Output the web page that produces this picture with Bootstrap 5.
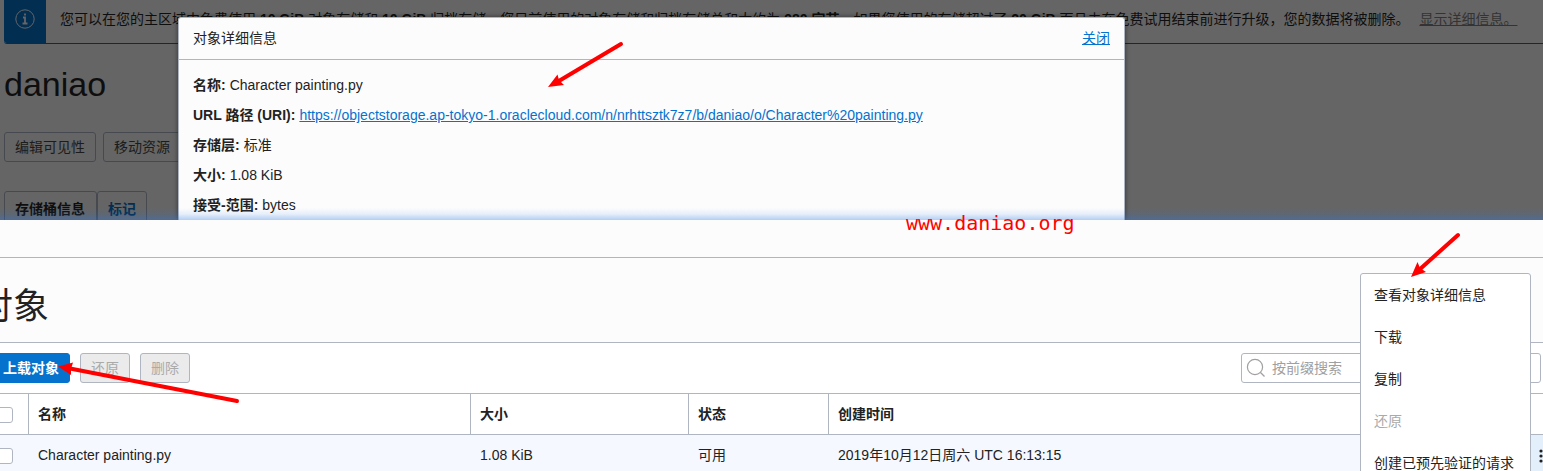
<!DOCTYPE html>
<html lang="zh-CN">
<head>
<meta charset="utf-8">
<meta name="viewport" content="width=device-width, initial-scale=1">
<title>对象存储</title>
<link href="https://cdn.jsdelivr.net/npm/bootstrap@5.3.0/dist/css/bootstrap.min.css" rel="stylesheet">
<style>
:root { --line: #afb6c2; --ink: #222; --link: #0572ce; }
body { font-family: "Liberation Sans", "Noto Sans CJK SC", sans-serif; font-size: 14px; line-height: 20px; color: var(--ink); background: #fcfcfc; }
a { color: var(--link); }
.btn { --bs-btn-font-size: 14px; --bs-btn-line-height: 20px; --bs-btn-padding-x: 10px; --bs-btn-padding-y: 4px; --bs-btn-border-radius: 3px; white-space: nowrap; }
/* dimmed bucket page with the details dialog on top */
.dimmed { height: 220px; background: #656565; color: #0e0e0e; }
.notice { height: 44px; margin-left: 4px; border-bottom: 1px solid #022e52; border-radius: 0 0 0 3px; }
.notice-icon { width: 42px; padding-bottom: 6px; background: #022e52; border-bottom-left-radius: 3px; }
.notice-text { padding: 9px 14px; }
.notice a { color: #333; margin-left: 6px; }
.bucket-name { font-size: 34px; line-height: 44px; margin: 18px 0 26px; }
.bucket-actions { gap: 7px; margin-bottom: 29px; }
.btn-dim { --bs-btn-color: #1c1c1c; --bs-btn-border-color: #464a50; }
.tab-dim { --bs-btn-padding-y: 7px; --bs-btn-color: #0e0e0e; --bs-btn-border-color: #464a50; --bs-btn-border-radius: 3px 3px 0 0; font-weight: 700; }
.tab-info { padding-right: 11px; }
.tab-link { --bs-btn-color: #022e52; }
.dialog { top: 17px; left: 178px; right: 418px; bottom: 0; background: #fcfcfc; color: var(--ink); border: 1px solid var(--line); border-bottom: 0; border-radius: 3px 3px 0 0; box-shadow: 0 0 5px rgba(0,0,0,.5); }
.dialog-head { height: 42px; padding: 0 14px 2px; border-bottom: 1px solid var(--line); }
.dialog dl { line-height: 30px; padding: 10px 14px 0; }
.dialog dd { margin: 0; }
.glow { height: 12px; background: linear-gradient(rgba(40,120,230,0), rgba(40,120,230,.1) 50%, rgba(40,120,230,.35)); }
.watermark { left: 906px; top: 210px; font: 20px/26px "DejaVu Sans Mono", monospace; color: #f00; }
/* object list */
.objects-strip { height: 38px; border-bottom: 1px solid var(--line); }
.objects-title { padding: 27px 0 13px; border-bottom: 1px solid var(--line); }
.objects-title h2 { font-family: "Liberation Sans", "Noto Sans CJK SC", sans-serif; font-size: 36px; line-height: 44px; margin: 0 0 0 -23px; }
.objects-bar { height: 50px; }
.btn-up { --bs-btn-bg: #0572ce; --bs-btn-border-color: #0572ce; --bs-btn-color: #fff; font-weight: 700; margin-left: -8px; }
.btn-off { --bs-btn-disabled-bg: #ebebeb; --bs-btn-disabled-border-color: #afb6c2; --bs-btn-disabled-color: #aaa; --bs-btn-disabled-opacity: 1; width: 50px; padding: 4px 0; margin-left: 10px; }
.search { width: 300px; height: 30px; margin-right: 2px; padding-left: 4px; border: 1px solid var(--line); border-radius: 3px; }
.search input { outline: 0; min-width: 0; margin-left: 6px; }
.search input::placeholder { color: #a0a0a0; }
.objects-table { table-layout: fixed; width: 100%; border-collapse: separate; border-spacing: 0; }
.objects-table th { height: 42px; border: solid var(--line); border-width: 1px 1px 1px 0; padding: 0 9px; }
.objects-table th:nth-last-child(-n+2) { border-right: 0; }
.objects-table td { height: 40px; padding: 0 9px; background: #f5f8fe; }
.objects-table td.row-menu { background: #e3f0fb; padding: 0; text-align: right; }
.objects-table .pick { padding: 0; }
.pick input { appearance: none; display: block; width: 16px; height: 16px; margin: 2px 0 0 -3px; background: #fff; border: 1px solid var(--line); border-radius: 3px; }
.c-pick { width: 29px; } .c-name { width: 442px; } .c-size { width: 218px; } .c-state { width: 140px; } .c-menu { width: 20px; }
.actions { top: 273px; right: 12px; width: 171px; background: #fff; border: 1px solid var(--line); border-radius: 3px; }
.actions button { height: 42px; padding: 0 13px; color: var(--ink); }
.actions button:disabled { color: #aaa; }
.arrows { left: 0; top: 0; pointer-events: none; }
</style>
</head>
<body>
<div class="page position-relative overflow-hidden vh-100">
  <section class="dimmed position-relative overflow-hidden">
    <div class="notice d-flex">
      <div class="notice-icon d-flex align-items-center justify-content-center flex-shrink-0">
        <svg width="20" height="20" viewBox="0 0 20 20" fill="none" stroke="#656565"><circle cx="10" cy="10" r="9.2"/><path d="M10 4.500v2M8 8.500h2v6M7.500 14.500h5" stroke-width="1.800"/></svg>
      </div>
      <div class="notice-text text-nowrap">您可以在您的主区域中免费使用 <b>10 GiB</b> 对象存储和 <b>10 GiB</b> 归档存储。您目前使用的对象存储和归档存储总和大约为 <b>980 字节</b>。如果您使用的存储超过了 <b>20 GiB</b> 而且未在免费试用结束前进行升级，您的数据将被删除。 <a href="#">显示详细信息。</a></div>
    </div>
    <div class="ps-1">
      <h1 class="bucket-name fw-normal">daniao</h1>
      <div class="bucket-actions d-flex"><button class="btn btn-dim" type="button">编辑可见性</button><button class="btn btn-dim" type="button">移动资源</button></div>
      <div class="d-flex"><button class="btn tab-dim tab-info" type="button">存储桶信息</button><button class="btn tab-dim tab-link" type="button">标记</button></div>
    </div>
    <div class="dialog position-absolute" role="dialog" aria-labelledby="dlg">
      <div class="dialog-head d-flex align-items-center justify-content-between"><span id="dlg">对象详细信息</span><a href="#">关闭</a></div>
      <dl class="m-0">
        <div class="d-flex gap-1"><dt>名称:</dt><dd>Character painting.py</dd></div>
        <div class="d-flex gap-1"><dt>URL 路径 (URI):</dt><dd><a href="#">https://objectstorage.ap-tokyo-1.oraclecloud.com/n/nrhttsztk7z7/b/daniao/o/Character%20painting.py</a></dd></div>
        <div class="d-flex gap-1"><dt>存储层:</dt><dd>标准</dd></div>
        <div class="d-flex gap-1"><dt>大小:</dt><dd>1.08 KiB</dd></div>
        <div class="d-flex gap-1"><dt>接受-范围:</dt><dd>bytes</dd></div>
      </dl>
    </div>
    <div class="glow position-absolute bottom-0 start-0 end-0"></div>
  </section>

  <section>
    <div class="objects-strip"></div>
    <div class="objects-title"><h2 class="fw-normal">对象</h2></div>
    <div class="objects-bar bg-white d-flex align-items-center">
      <button class="btn btn-up" type="button">上载对象</button>
      <button class="btn btn-off" type="button" disabled>还原</button>
      <button class="btn btn-off" type="button" disabled>删除</button>
      <label class="search ms-auto d-flex align-items-center bg-white">
        <svg width="20" height="20" viewBox="0 0 20 20" fill="none" stroke="#a0a0a0" stroke-width="1.200"><circle cx="9" cy="9" r="7.600"/><path d="M14.500 14.500l4 4"/></svg>
        <input class="border-0 p-0 flex-grow-1" type="search" placeholder="按前缀搜索" aria-label="按前缀搜索">
      </label>
    </div>
    <table class="objects-table">
      <colgroup><col class="c-pick"><col class="c-name"><col class="c-size"><col class="c-state"><col><col class="c-menu"></colgroup>
      <thead class="bg-white"><tr><th class="pick"><input type="checkbox" aria-label="全选"></th><th>名称</th><th>大小</th><th>状态</th><th>创建时间</th><th></th></tr></thead>
      <tbody><tr><td class="pick"><input type="checkbox" aria-label="选择"></td><td>Character painting.py</td><td>1.08 KiB</td><td>可用</td><td>2019年10月12日周六 UTC 16:13:15</td>
        <td class="row-menu"><svg width="4" height="16" viewBox="0 0 4 16" fill="#222"><circle cx="2" cy="3" r="1.600"/><circle cx="2" cy="8" r="1.600"/><circle cx="2" cy="13" r="1.600"/></svg></td></tr></tbody>
    </table>
  </section>

  <div class="actions position-absolute d-flex flex-column" role="menu">
    <button class="border-0 bg-transparent text-start text-nowrap" type="button">查看对象详细信息</button>
    <button class="border-0 bg-transparent text-start text-nowrap" type="button">下载</button>
    <button class="border-0 bg-transparent text-start text-nowrap" type="button">复制</button>
    <button class="border-0 bg-transparent text-start text-nowrap" type="button" disabled>还原</button>
    <button class="border-0 bg-transparent text-start text-nowrap" type="button">创建已预先验证的请求</button>
  </div>

  <div class="watermark position-absolute">www.daniao.org</div>
  <svg class="arrows position-absolute" width="1543" height="471" viewBox="0 0 1543 471" fill="#f00" stroke="#f00" stroke-linecap="round">
    <path d="M621 44L558 81.500" stroke-width="4"/><path stroke="none" d="M548 87L557.500 74.500L559 80L564 85Z"/>
    <path d="M1458 235L1419 270" stroke-width="4"/><path stroke="none" d="M1411 277L1417.500 262L1420 268L1426 272Z"/>
    <path d="M237 401L70 368.500" stroke-width="4"/><path stroke="none" d="M58 366.500L73 362.500L71 369L71 375Z"/>
  </svg>
</div>
<script src="https://cdn.jsdelivr.net/npm/bootstrap@5.3.0/dist/js/bootstrap.bundle.min.js"></script>
</body>
</html>
